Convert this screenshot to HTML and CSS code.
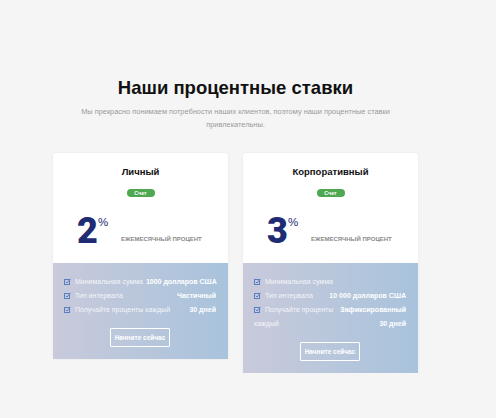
FILE: index.html
```html
<!DOCTYPE html>
<html lang="ru">
<head>
<meta charset="utf-8">
<title>Наши процентные ставки</title>
<link rel="stylesheet" href="styles.css">
</head>
<body>
<section class="rates">
  <h1 class="title">Наши процентные ставки</h1>
  <p class="lead">Мы прекрасно понимаем потребности наших клиентов, поэтому наши процентные ставки привлекательны.</p>
  <div class="cards">
    <div class="card">
      <div class="card-top">
        <h2 class="card-title">Личный</h2>
        <span class="badge">Счет</span>
        <div class="rate">
          <div class="num"><span class="digit">2</span><span class="pct">%</span></div>
          <span class="rate-label">ЕЖЕМЕСЯЧНЫЙ ПРОЦЕНТ</span>
        </div>
      </div>
      <div class="card-bottom">
        <ul class="list">
          <li class="row"><svg class="chk" viewBox="0 0 7 7"><rect x="0.5" y="1.5" width="5" height="5" fill="none" stroke="#5b80c2" stroke-width="1"/><path d="M1.8 3.8 L3 5 L6.5 0.8" fill="none" stroke="#5b80c2" stroke-width="1"/></svg><span class="label">Минимальная сумма</span><span class="value">1000 долларов США</span></li>
          <li class="row"><svg class="chk" viewBox="0 0 7 7"><rect x="0.5" y="1.5" width="5" height="5" fill="none" stroke="#5b80c2" stroke-width="1"/><path d="M1.8 3.8 L3 5 L6.5 0.8" fill="none" stroke="#5b80c2" stroke-width="1"/></svg><span class="label">Тип интервала</span><span class="value">Частичный</span></li>
          <li class="row"><svg class="chk" viewBox="0 0 7 7"><rect x="0.5" y="1.5" width="5" height="5" fill="none" stroke="#5b80c2" stroke-width="1"/><path d="M1.8 3.8 L3 5 L6.5 0.8" fill="none" stroke="#5b80c2" stroke-width="1"/></svg><span class="label">Получайте проценты каждый</span><span class="value">30 дней</span></li>
        </ul>
        <a class="btn" href="#">Начните сейчас</a>
      </div>
    </div>
    <div class="card">
      <div class="card-top">
        <h2 class="card-title">Корпоративный</h2>
        <span class="badge">Счет</span>
        <div class="rate">
          <div class="num"><span class="digit">3</span><span class="pct">%</span></div>
          <span class="rate-label">ЕЖЕМЕСЯЧНЫЙ ПРОЦЕНТ</span>
        </div>
      </div>
      <div class="card-bottom">
        <ul class="list">
          <li class="row"><svg class="chk" viewBox="0 0 7 7"><rect x="0.5" y="1.5" width="5" height="5" fill="none" stroke="#5b80c2" stroke-width="1"/><path d="M1.8 3.8 L3 5 L6.5 0.8" fill="none" stroke="#5b80c2" stroke-width="1"/></svg><span class="label">Минимальная сумма</span></li>
          <li class="row"><svg class="chk" viewBox="0 0 7 7"><rect x="0.5" y="1.5" width="5" height="5" fill="none" stroke="#5b80c2" stroke-width="1"/><path d="M1.8 3.8 L3 5 L6.5 0.8" fill="none" stroke="#5b80c2" stroke-width="1"/></svg><span class="label">Тип интервала</span><span class="value">10 000 долларов США</span></li>
          <li class="row"><svg class="chk" viewBox="0 0 7 7"><rect x="0.5" y="1.5" width="5" height="5" fill="none" stroke="#5b80c2" stroke-width="1"/><path d="M1.8 3.8 L3 5 L6.5 0.8" fill="none" stroke="#5b80c2" stroke-width="1"/></svg><span class="label">Получайте проценты</span><span class="value">Зафиксированный</span></li>
          <li class="row row-plain"><span class="label">каждый</span><span class="value">30 дней</span></li>
        </ul>
        <a class="btn" href="#">Начните сейчас</a>
      </div>
    </div>
  </div>
</section>
</body>
</html>
```
FILE: styles.css
```css
html, body {
  margin: 0;
  padding: 0;
  background: #f5f5f5;
  font-family: "Liberation Sans", Arial, sans-serif;
}

.rates {
  width: 365px;
  margin-left: 53px;
  padding-top: 76px;
}

.title {
  margin: 0;
  font-size: 18.5px;
  line-height: 23px;
  font-weight: bold;
  color: #111;
  text-align: center;
}

.lead {
  margin: 7px auto 0;
  width: 330px;
  font-size: 7.4px;
  line-height: 12.5px;
  color: #9a9a9a;
  text-align: center;
}

.cards {
  display: flex;
  align-items: flex-start;
  gap: 15px;
  margin-top: 22px;
}

.card {
  width: 175px;
  background: #fff;
  border-radius: 3px 3px 0 0;
  box-shadow: 0 0 3px rgba(0, 0, 0, 0.06);
  display: flex;
  flex-direction: column;
}

.card-top {
  display: flex;
  flex-direction: column;
  align-items: center;
  padding: 13px 0 14px;
}

.card-title {
  margin: 0;
  font-size: 9.5px;
  line-height: 12px;
  font-weight: bold;
  color: #111;
}

.badge {
  margin-top: 11px;
  width: 28px;
  height: 8px;
  border-radius: 4px;
  background: #4ea852;
  color: #fff;
  font-size: 5.3px;
  font-weight: bold;
  line-height: 8px;
  text-align: center;
}

.rate {
  align-self: stretch;
  display: flex;
  align-items: flex-end;
  margin-top: 16px;
  padding-left: 24px;
}

.num {
  display: flex;
  align-items: flex-start;
  width: 44px;
}

.digit {
  font-family: Roboto, "Liberation Sans", sans-serif;
  font-size: 36px;
  line-height: 36px;
  font-weight: 900;
  color: #1f2c74;
}

.pct {
  margin-top: 3px;
  font-size: 11.5px;
  line-height: 12px;
  color: #1f2c74;
}

.rate-label {
  font-size: 6px;
  line-height: 8px;
  padding-bottom: 6px;
  font-weight: bold;
  color: #8a8a8a;
}

.card-bottom {
  background: linear-gradient(90deg, #c9cadb 0%, #a8c3dc 100%);
  padding: 11px 12px 12px 11px;
  display: flex;
  flex-direction: column;
  align-items: center;
}

.list {
  list-style: none;
  margin: 0;
  padding: 0;
  align-self: stretch;
}

.row {
  display: flex;
  align-items: center;
  height: 14px;
  font-size: 7px;
}

.chk {
  width: 7px;
  height: 7px;
  margin-right: 4px;
  flex: none;
}

.label {
  color: rgba(255, 255, 255, 0.85);
  white-space: nowrap;
}

.value {
  margin-left: auto;
  padding-left: 3px;
  color: #fff;
  font-weight: bold;
  white-space: nowrap;
}

.btn {
  margin-top: 12px;
  width: 58px;
  height: 17px;
  border: 1px solid #fff;
  border-radius: 1px;
  color: #fff;
  font-size: 6.5px;
  font-weight: bold;
  line-height: 17px;
  text-align: center;
  text-decoration: none;
}
```
